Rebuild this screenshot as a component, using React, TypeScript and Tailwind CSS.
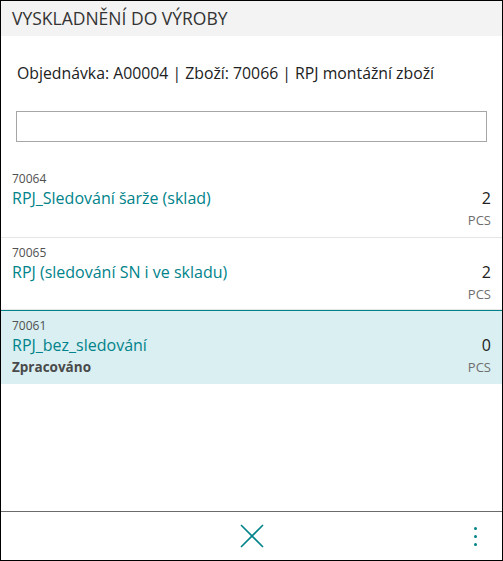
import React from "react";

const rows = [
  { code: "70064", name: "RPJ_Sledování šarže (sklad)", qty: "2", selected: false, status: "", h: "h-[74px]" },
  { code: "70065", name: "RPJ (sledování SN i ve skladu)", qty: "2", selected: false, status: "", h: "h-[72px]" },
  { code: "70061", name: "RPJ_bez_sledování", qty: "0", selected: true, status: "Zpracováno", h: "h-[74px]" },
];

export default function App() {
  return (
    <div
      className="w-[503px] h-[561px] border border-black bg-white flex flex-col text-[#212121]"
      style={{ fontFamily: '"Segoe UI", "Open Sans", "Noto Sans", sans-serif' }}
    >
      <div className="h-[35px] bg-[#f3f3f3] flex items-center px-[11px] shrink-0">
        <span className="text-[17.5px] text-[#333]">VYSKLADNĚNÍ DO VÝROBY</span>
      </div>
      <div className="pt-[26px] px-[16px] text-[15.8px] leading-[22px] text-[#212121]">
        Objednávka: A00004 | Zboží: 70066 | RPJ montážní zboží
      </div>
      <div className="px-[15px] pt-[27px] pb-[22px]">
        <input className="block w-full h-[31px] border border-[#a6a6a6] outline-none px-2" />
      </div>
      <div className="flex flex-col">
        {rows.map((r) => (
          <div
            key={r.code}
            className={
              (r.selected
                ? "bg-[#d9eff1] border-t border-[#00838a] "
                : "border-b border-[#e6e6e6] ") +
              "flex justify-between px-[11px] pt-[8px] box-border " +
              r.h
            }
          >
            <div className="flex flex-col">
              <span className="text-[12px] leading-[14px] text-[#505050]">{r.code}</span>
              <span className="text-[16px] leading-[25px] text-[#00838a]">{r.name}</span>
              {r.status && (
                <span className="text-[13.5px] leading-[19px] font-bold text-[#4a4a4a]">{r.status}</span>
              )}
            </div>
            <div className="flex flex-col items-end pt-[14px]">
              <span className="text-[16px] leading-[24px] text-[#212121]">{r.qty}</span>
              <span className="text-[13px] leading-[20px] text-[#6e6e6e]">PCS</span>
            </div>
          </div>
        ))}
      </div>
      <div className="flex-1" />
      <div className="h-[49px] border-t border-[#6b6b6b] shrink-0 relative flex items-center justify-center">
        <svg width="24" height="24" viewBox="0 0 24 24" className="text-[#00838a]">
          <path d="M1 1 L23 23 M23 1 L1 23" stroke="currentColor" strokeWidth="1.6" fill="none" />
        </svg>
        <div className="absolute right-[25px] top-[15px] flex flex-col gap-[5px]">
          <span className="block w-[3px] h-[3px] rounded-full bg-[#00838a]" />
          <span className="block w-[3px] h-[3px] rounded-full bg-[#00838a]" />
          <span className="block w-[3px] h-[3px] rounded-full bg-[#00838a]" />
        </div>
      </div>
    </div>
  );
}
